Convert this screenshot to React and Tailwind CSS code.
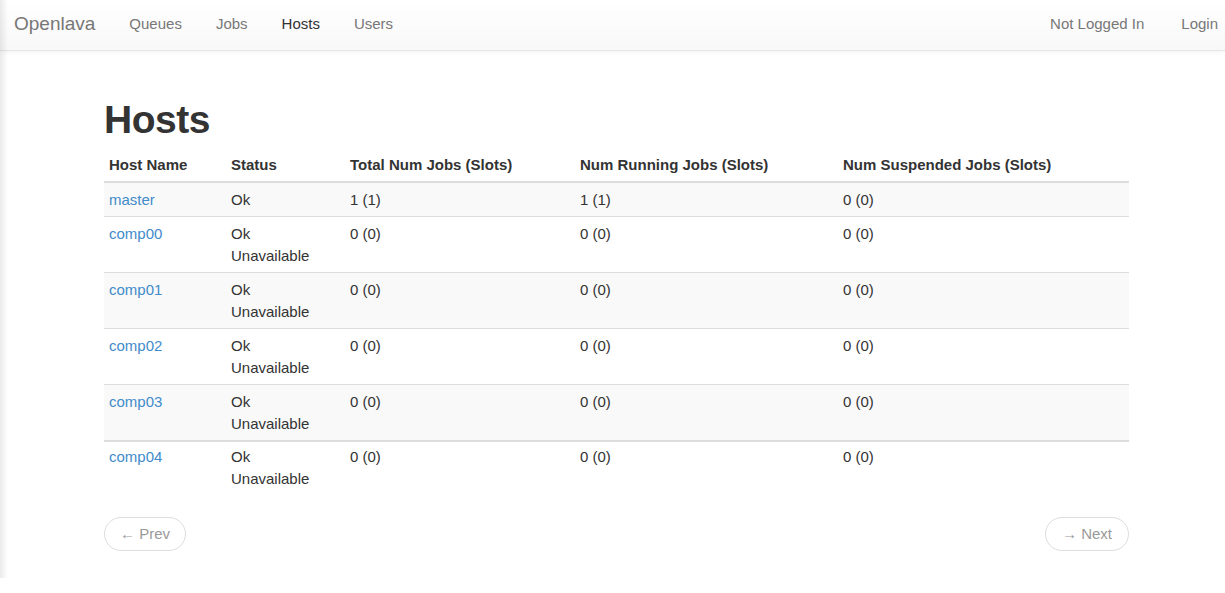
const hosts = [
  { name: 'master', status: ['Ok'], total: '1 (1)', running: '1 (1)', suspended: '0 (0)' },
  { name: 'comp00', status: ['Ok', 'Unavailable'], total: '0 (0)', running: '0 (0)', suspended: '0 (0)' },
  { name: 'comp01', status: ['Ok', 'Unavailable'], total: '0 (0)', running: '0 (0)', suspended: '0 (0)' },
  { name: 'comp02', status: ['Ok', 'Unavailable'], total: '0 (0)', running: '0 (0)', suspended: '0 (0)' },
  { name: 'comp03', status: ['Ok', 'Unavailable'], total: '0 (0)', running: '0 (0)', suspended: '0 (0)' },
];

const lastHost = { name: 'comp04', status: ['Ok', 'Unavailable'], total: '0 (0)', running: '0 (0)', suspended: '0 (0)' };

const columns = ['Host Name', 'Status', 'Total Num Jobs (Slots)', 'Num Running Jobs (Slots)', 'Num Suspended Jobs (Slots)'];

const cell = 'pl-[5px] pr-[5px] pb-[5px] align-top text-left';

const HostRow = ({ host, striped, border = true, top = 'pt-[6px]' }) => (
  <tr className={`${striped ? 'bg-[#f9f9f9]' : 'bg-white'} ${border ? 'border-b border-[#dddddd]' : ''}`}>
    <td className={`${cell} ${top}`}>
      <a href="#" className="text-[#428bca]">{host.name}</a>
    </td>
    <td className={`${cell} ${top}`}>
      {host.status.map((s) => (
        <div key={s}>{s}</div>
      ))}
    </td>
    <td className={`${cell} ${top}`}>{host.total}</td>
    <td className={`${cell} ${top}`}>{host.running}</td>
    <td className={`${cell} ${top}`}>{host.suspended}</td>
  </tr>
);

export default function App() {
  return (
    <div className="relative min-h-[593px] bg-white font-['Liberation_Sans',Arial,sans-serif] text-[15px] leading-[22px] text-[#333333]">
      <div className="pointer-events-none absolute left-0 top-0 h-[578px] w-[8px] bg-gradient-to-r from-black/[0.08] to-transparent" />

      <nav className="flex h-[51px] items-center border-b border-[#e7e7e7] bg-gradient-to-b from-white to-[#f8f8f8] shadow-[0_1px_5px_rgba(0,0,0,0.06)]">
        <a href="#" className="pl-[14px] pr-[17px] pb-[2px] text-[19px] leading-[20px] text-[#777777]">Openlava</a>
        <ul className="flex">
          {['Queues', 'Jobs', 'Hosts', 'Users'].map((item) => (
            <li key={item}>
              <a href="#" className={`block px-[17px] pt-[14px] pb-[16px] leading-[20px] ${item === 'Hosts' ? 'text-[#333333]' : 'text-[#777777]'}`}>
                {item}
              </a>
            </li>
          ))}
        </ul>
        <ul className="ml-auto flex">
          <li>
            <a href="#" className="block px-[17px] pt-[14px] pb-[16px] leading-[20px] text-[#777777]">Not Logged In</a>
          </li>
          <li>
            <a href="#" className="block pl-[20px] pr-[7px] pt-[14px] pb-[16px] leading-[20px] text-[#777777]">Login</a>
          </li>
        </ul>
      </nav>

      <div className="ml-[104px] w-[1025px]">
        <h1 className="mt-[47px] mb-[7px] text-[39px] font-bold leading-[43px] tracking-[-0.5px] text-[#333333]">Hosts</h1>

        <table className="w-full table-fixed border-collapse">
          <colgroup>
            <col className="w-[122px]" />
            <col className="w-[119px]" />
            <col className="w-[230px]" />
            <col className="w-[263px]" />
            <col className="w-[291px]" />
          </colgroup>
          <thead>
            <tr className="border-b-2 border-[#dddddd]">
              {columns.map((c) => (
                <th key={c} className={`${cell} pt-[6px] font-bold`}>{c}</th>
              ))}
            </tr>
          </thead>
          <tbody>
            {hosts.map((h, i) => (
              <HostRow key={h.name} host={h} striped={i % 2 === 0} border={i < hosts.length - 1} />
            ))}
          </tbody>
          <tbody className="border-t-2 border-[#dddddd]">
            <HostRow host={lastHost} striped={false} border={false} top="pt-[4px]" />
          </tbody>
        </table>

        <div className="mt-[22px] flex justify-between">
          <a href="#" className="h-[34px] rounded-full border border-[#dddddd] bg-white px-[15px] leading-[32px] text-[#999999]">&larr; Prev</a>
          <a href="#" className="h-[34px] rounded-full border border-[#dddddd] bg-white px-[16px] leading-[32px] text-[#999999]">&rarr; Next</a>
        </div>
      </div>
    </div>
  );
}
